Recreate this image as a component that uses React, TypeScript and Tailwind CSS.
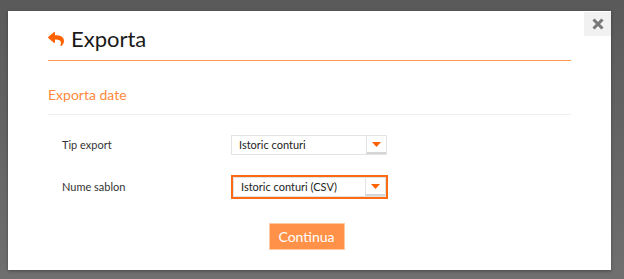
import { FaReply } from "react-icons/fa";

function Select({ value, focused }: { value: string; focused?: boolean }) {
  const box = (w: string) => (
    <div className={`flex h-[20px] ${w} border border-[#e3e3e3] bg-white`}>
      <div className="flex flex-1 items-center pl-[7px] text-[11px] text-[#222]">{value}</div>
      <div className="flex w-[20px] items-center justify-center border-l border-[#e3e3e3] border-b-2 border-b-[#d6d6d6]">
        <svg width="9" height="5" viewBox="0 0 9 5">
          <path d="M0 0h9L4.5 5z" fill="#ff6200" />
        </svg>
      </div>
    </div>
  );
  if (focused) {
    return <div className="border-2 border-[#ff6a13]">{box("w-[153px]")}</div>;
  }
  return box("w-[156px]");
}

function App() {
  return (
    <div
      className="h-[279px] w-[624px] bg-gradient-to-b from-[#5a5a5a] to-[#6f6f6f] pt-[11px] pl-[8px]"
      style={{ fontFamily: "Lato, 'Open Sans', sans-serif" }}
    >
      <div className="relative h-[259px] w-[603px] bg-white px-[40px] shadow-[0_1px_3px_rgba(0,0,0,0.35)]">
        <button className="absolute top-[1px] right-0 flex h-[24px] w-[27px] items-center justify-center bg-[#f1f1f1]">
          <svg width="12" height="12" viewBox="0 0 12 12">
            <path d="M1.5 1.5l9 9M10.5 1.5l-9 9" stroke="#777" strokeWidth="3" />
          </svg>
        </button>

        <header className="flex h-[50px] items-start gap-[7px] border-b border-[#ff9a55] pt-[15px]">
          <FaReply className="mt-[5px] text-[16px] text-[#ff6200]" />
          <h1 className="text-[22px] leading-[26px] text-[#1a1a1a]">Exporta</h1>
        </header>

        <h2 className="mt-[24px] border-b border-[#eeeeee] pb-[9px] text-[14px] leading-[20px] text-[#ff8a3d]">
          Exporta date
        </h2>

        <div className="mt-[20px] flex flex-col gap-[20px] pl-[14px]">
          <div className="flex h-[20px] items-center">
            <span className="w-[169px] text-[11px] text-[#333]">Tip export</span>
            <Select value="Istoric conturi" />
          </div>
          <div className="flex h-[24px] items-center">
            <span className="w-[169px] text-[11px] text-[#333]">Nume sablon</span>
            <Select value="Istoric conturi (CSV)" focused />
          </div>
        </div>

        <div className="mt-[24px] flex justify-center pr-[6px]">
          <button className="h-[27px] w-[76px] border border-[#ffc9a6] bg-[#ff9248] text-[14px] text-white">
            Continua
          </button>
        </div>
      </div>
    </div>
  );
}

export default App;
